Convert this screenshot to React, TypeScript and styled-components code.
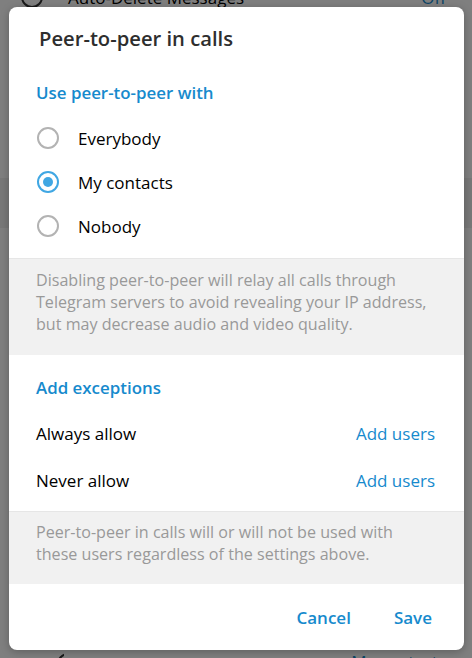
import React from "react";
import styled, { createGlobalStyle } from "styled-components";

const Global = createGlobalStyle`
  html, body { margin: 0; padding: 0; }
  body {
    width: 472px;
    height: 658px;
    overflow: hidden;
    background: #ffffff;
    font-family: "Open Sans", "Noto Sans", sans-serif;
    -webkit-font-smoothing: antialiased;
  }
  * { box-sizing: border-box; }
`;

const Stage = styled.div`
  position: relative;
  width: 472px;
  height: 658px;
  overflow: hidden;
`;

/* ---------- settings page behind the dialog ---------- */
const Page = styled.div`
  display: flex;
  flex-direction: column;
  background: #ffffff;
  height: 100%;
`;

const PageRow = styled.div<{ $h: number }>`
  display: flex;
  align-items: center;
  height: ${(p) => p.$h}px;
  padding: 0 26px 0 20px;
  gap: 24px;
  font-size: 17px;
  color: #000;
  flex-shrink: 0;
`;

const FirstRow = styled(PageRow)`
  margin-top: -24px;
`;

const LastRow = styled(PageRow)`
  align-items: flex-start;
  padding-top: 2px;
  overflow: hidden;
`;

const PageRowLabel = styled.span`
  flex: 1;
`;

const PageRowValue = styled.span`
  color: #168acd;
`;

const Divider = styled.div`
  height: 50px;
  background: #f1f1f1;
  flex-shrink: 0;
`;

const Spacer = styled.div`
  flex: 1;
`;

const Overlay = styled.div`
  position: absolute;
  inset: 0;
  background: rgba(0, 0, 0, 0.5);
`;

/* ---------- dialog ---------- */
const Dialog = styled.div`
  position: absolute;
  left: 9px;
  top: 7px;
  width: 455px;
  height: 643px;
  background: #ffffff;
  border-radius: 8px;
  overflow: hidden;
  display: flex;
  flex-direction: column;
  box-shadow: 0 2px 8px rgba(0, 0, 0, 0.25);
`;

const Title = styled.div`
  height: 74px;
  padding: 18px 0 0 30px;
  font-size: 20.2px;
  line-height: 26px;
  font-weight: 600;
  color: #2e2e2e;
`;

const SectionHeader = styled.div<{ $top?: number }>`
  height: 24px;
  line-height: 24px;
  margin-top: ${(p) => p.$top ?? 0}px;
  padding-left: 27px;
  font-size: 16.9px;
  font-weight: 600;
  color: #168acd;
`;

const RadioList = styled.div`
  margin-top: 11px;
  display: flex;
  flex-direction: column;
`;

const RadioRow = styled.div`
  height: 44px;
  display: flex;
  align-items: center;
  padding-left: 28px;
  gap: 19px;
`;

const RadioCircle = styled.span<{ $checked: boolean }>`
  width: 22px;
  height: 22px;
  border-radius: 50%;
  border: 2px solid ${(p) => (p.$checked ? "#40a7e3" : "#b3b3b3")};
  display: flex;
  align-items: center;
  justify-content: center;
  flex-shrink: 0;
  &::after {
    content: "";
    display: ${(p) => (p.$checked ? "block" : "none")};
    width: 10px;
    height: 10px;
    border-radius: 50%;
    background: #40a7e3;
  }
`;

const RadioLabel = styled.span`
  font-size: 17px;
  color: #000000;
`;

const InfoBlock = styled.div<{ $top: number; $pt: number; $pb: number }>`
  margin-top: ${(p) => p.$top}px;
  padding: ${(p) => p.$pt}px 28px ${(p) => p.$pb}px 27px;
  background: #f1f1f1;
  box-shadow: inset 0 1px 0 #e6e6e6;
  font-size: 16.1px;
  line-height: 22px;
  color: #999999;
`;

const ExceptionRows = styled.div`
  margin-top: 10px;
  display: flex;
  flex-direction: column;
`;

const ExceptionRow = styled.div`
  height: 47px;
  display: flex;
  align-items: center;
  justify-content: space-between;
  padding: 0 29px 0 27px;
  font-size: 17px;
`;

const ExceptionLabel = styled.span`
  color: #000000;
`;

const LinkText = styled.span`
  color: #168acd;
`;

const Footer = styled.div`
  flex: 1;
  display: flex;
  justify-content: flex-end;
  align-items: flex-start;
  padding: 15px 20px 0 0;
`;

const Button = styled.button`
  height: 36px;
  padding: 0 12px;
  border: none;
  background: transparent;
  font-family: inherit;
  font-size: 17px;
  font-weight: 600;
  color: #168acd;
  cursor: pointer;
  margin-left: 19px;
`;

const options = ["Everybody", "My contacts", "Nobody"];

export default function App() {
  return (
    <Stage>
      <Global />
      <Page>
        <FirstRow $h={42}>
          <svg width="24" height="24" viewBox="0 0 24 24" fill="none" stroke="#333" strokeWidth="2">
            <circle cx="12" cy="12" r="10" />
          </svg>
          <PageRowLabel>Auto-Delete Messages</PageRowLabel>
          <PageRowValue>Off</PageRowValue>
        </FirstRow>
        <PageRow $h={160} />
        <Divider />
        <Spacer />
        <LastRow $h={10}>
          <svg width="44" height="24" viewBox="0 0 44 24" fill="none" stroke="#333" strokeWidth="2">
            <circle cx="48" cy="14" r="10" />
          </svg>
          <PageRowLabel />
          <PageRowValue>My contacts</PageRowValue>
        </LastRow>
      </Page>
      <Overlay />
      <Dialog>
        <Title>Peer-to-peer in calls</Title>
        <SectionHeader>Use peer-to-peer with</SectionHeader>
        <RadioList>
          {options.map((o) => (
            <RadioRow key={o}>
              <RadioCircle $checked={o === "My contacts"} />
              <RadioLabel>{o}</RadioLabel>
            </RadioRow>
          ))}
        </RadioList>
        <InfoBlock $top={10} $pt={11} $pb={20}>
          Disabling peer-to-peer will relay all calls through Telegram servers to avoid revealing your IP address, but may decrease audio and video quality.
        </InfoBlock>
        <SectionHeader $top={21}>Add exceptions</SectionHeader>
        <ExceptionRows>
          <ExceptionRow>
            <ExceptionLabel>Always allow</ExceptionLabel>
            <LinkText>Add users</LinkText>
          </ExceptionRow>
          <ExceptionRow>
            <ExceptionLabel>Never allow</ExceptionLabel>
            <LinkText>Add users</LinkText>
          </ExceptionRow>
        </ExceptionRows>
        <InfoBlock $top={7} $pt={10} $pb={19}>
          Peer-to-peer in calls will or will not be used with these users regardless of the settings above.
        </InfoBlock>
        <Footer>
          <Button>Cancel</Button>
          <Button>Save</Button>
        </Footer>
      </Dialog>
    </Stage>
  );
}
